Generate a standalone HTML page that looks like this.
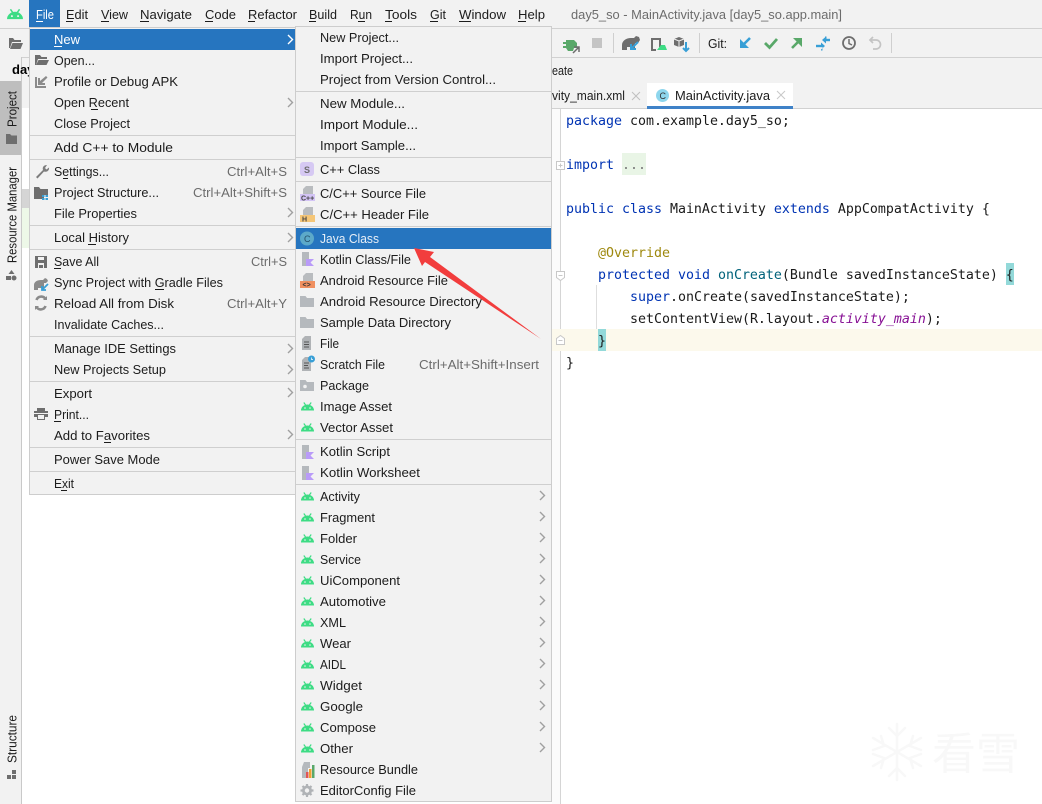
<!DOCTYPE html>
<html lang="en"><head><meta charset="utf-8"><title>day5_so - MainActivity.java</title>
<style>
html,body{margin:0;padding:0;background:#fff;width:1042px;height:804px;overflow:hidden}
svg{display:block}
text{font-family:"Liberation Sans","Noto Sans CJK SC",sans-serif;font-size:13px;fill:#1c1c1c}
.s{fill:#6c6c6c}
.m{font-family:"DejaVu Sans Mono","Liberation Mono",monospace;font-size:13.29px;fill:#1a1a1a}
.k{fill:#0033b3}.a{fill:#9e880d}.f{fill:#00627a}.p{fill:#871094;font-style:italic}
.w{fill:#fff}
</style></head><body>
<svg xmlns="http://www.w3.org/2000/svg" width="1042" height="804" viewBox="0 0 1042 804">
<defs>
<g id="and"><path d="M0 9.500a6.500 6 0 0 1 13 0z" fill="#3ddc84"/><path d="M2.800 1.500l1.800 2.500M10.200 1.500l-1.800 2.500" stroke="#3ddc84" stroke-width="1.200"/><circle cx="4" cy="7" r=".8" fill="#f2f2f2"/><circle cx="9" cy="7" r=".8" fill="#f2f2f2"/></g>
<path id="chev" d="M0 0l4.500 4.500L0 9" fill="none" stroke="#a0a0a0" stroke-width="1.400"/>
<path id="dir" d="M0 0h5.500l1.500 2h7v9H0z" fill="#b5b9bd"/>
<g id="doc"><path d="M3 0h7v8H0V3z" fill="#b9bcbf"/></g>
<g id="kot"><path d="M1 0h7v14H1z" fill="#b5b9bd"/><path d="M5 7h8l-3.500 3.500L13 14H5z" fill="#b99bf8"/></g>
</defs>

<!-- base -->
<rect width="1042" height="804" fill="#fff"/>
<rect width="1042" height="108" fill="#f2f2f2"/>
<rect y="28" width="1042" height="1" fill="#d1d1d1"/>
<rect y="57" width="1042" height="1" fill="#d1d1d1"/>
<rect x="552" y="108" width="490" height="1" fill="#d1d1d1"/>

<!-- left strip -->
<rect x="0" y="57" width="21" height="747" fill="#f2f2f2"/>
<rect x="21" y="57" width="1" height="747" fill="#c9c9c9"/>
<rect x="0" y="81" width="21" height="74" fill="#bebebe"/>
<rect x="22" y="82" width="8" height="26" fill="#f2f2f2"/>
<rect x="22" y="189" width="8" height="19" fill="#d5d5d5"/>
<rect x="22" y="208" width="8" height="40" fill="#edf8e8"/>
<text transform="translate(16.500,127) rotate(-90)" textLength="36" lengthAdjust="spacingAndGlyphs">Project</text>
<path d="M6 134h4l1.500 1.500H17V144H6z" fill="#6e6e6e"/>
<text transform="translate(16.500,263) rotate(-90)" textLength="96" lengthAdjust="spacingAndGlyphs">Resource Manager</text>
<path d="M11.500 270l3 4h-6z M6 276h5v4H6z" fill="#6e6e6e"/><circle cx="14" cy="278" r="2.500" fill="#6e6e6e"/>
<text transform="translate(16.500,763) rotate(-90)" textLength="48" lengthAdjust="spacingAndGlyphs">Structure</text>
<path d="M12 770h4v4h-4zM7 775h4v4H7zM12 775h4v4h-4z" fill="#6e6e6e"/>
<text x="12" y="74" style="font-weight:700;fill:#000">day</text>

<!-- title & menu bar -->
<use href="#and" transform="translate(7,7.500) scale(1.230)"/>
<rect x="29" y="0" width="31" height="28" fill="#2675bf"/>
<text x="36" y="19" class="w" textLength="18" lengthAdjust="spacingAndGlyphs">File</text>
<text x="66" y="19" textLength="22" lengthAdjust="spacingAndGlyphs">Edit</text>
<text x="101" y="19" textLength="27" lengthAdjust="spacingAndGlyphs">View</text>
<text x="140" y="19" textLength="52" lengthAdjust="spacingAndGlyphs">Navigate</text>
<text x="205" y="19" textLength="31" lengthAdjust="spacingAndGlyphs">Code</text>
<text x="248" y="19" textLength="49" lengthAdjust="spacingAndGlyphs">Refactor</text>
<text x="309" y="19" textLength="28" lengthAdjust="spacingAndGlyphs">Build</text>
<text x="350" y="19" textLength="22" lengthAdjust="spacingAndGlyphs">Run</text>
<text x="385" y="19" textLength="32" lengthAdjust="spacingAndGlyphs">Tools</text>
<text x="430" y="19" textLength="16" lengthAdjust="spacingAndGlyphs">Git</text>
<text x="459" y="19" textLength="47" lengthAdjust="spacingAndGlyphs">Window</text>
<text x="518" y="19" textLength="27" lengthAdjust="spacingAndGlyphs">Help</text>
<path d="M66 21.500h7M101 21.500h8M140 21.500h9M205 21.500h8M248 21.500h7M309 21.500h7M358 21.500h7M385 21.500h7M430 21.500h8M459 21.500h12M518 21.500h8" stroke="#1c1c1c" fill="none"/>
<path d="M36 21.500h7" stroke="#fff"/>
<text x="571" y="19" class="s" textLength="271" lengthAdjust="spacingAndGlyphs">day5_so - MainActivity.java [day5_so.app.main]</text>
<path d="M9 38h4l1.500 2H21v2H12l-2 6H9z M12.500 43H23l-2.500 6H10z" fill="#6e6e6e"/>

<!-- toolbar -->
<path d="M566 40h8l3 3v5h-3l-1 3h-5l-2-3h-3v-2h3v-2h-3v-2h3z" fill="#59a869"/>
<path d="M574 47l5 0v5M579 47l-6 6" stroke="#6e6e6e" stroke-width="1.500" fill="none"/>
<rect x="592" y="38" width="10" height="10" fill="#c4c4c4"/>
<rect x="613" y="33" width="1" height="20" fill="#cfcfcf"/>
<path d="M622 50v-5c0-4 4-7 9-7h3l2-2 3 1 1 3-2 3-3 0v7h-3v-3h-5v3z" fill="#6e6e6e"/>
<path d="M638 42l-7 7M631 44v5h5" stroke="#389fd6" stroke-width="2" fill="none"/>
<path d="M651 38h10v9h-2v-7h-6v9h3v2h-5z" fill="#6e6e6e"/>
<path d="M657 50l4-5 4 0 2 5z" fill="#3ddc84"/>
<path d="M679 37l5 2v6l-5 2-5-2v-6z" fill="#6e6e6e"/><path d="M679 41v6M674 39l5 2 5-2" stroke="#f2f2f2" fill="none"/>
<path d="M686 42v9M683 48l3 3 3-3" stroke="#389fd6" stroke-width="2" fill="none"/>
<rect x="699" y="33" width="1" height="20" fill="#cfcfcf"/>
<text x="708" y="48" textLength="19" lengthAdjust="spacingAndGlyphs">Git:</text>
<path d="M750 38l-8 8" stroke="#389fd6" stroke-width="2.600" fill="none"/><path d="M740 39v9h9z" fill="#389fd6"/>
<path d="M765 43l4.500 4.500 7.500-8.500" stroke="#59a869" stroke-width="2.800" fill="none"/>
<path d="M792 48l8-8" stroke="#59a869" stroke-width="2.600" fill="none"/><path d="M793 38h9v9z" fill="#59a869"/>
<path d="M830 40h-6" stroke="#389fd6" stroke-width="2.400" fill="none"/><path d="M822 40l4-3.500v7zM825 36.500h1.500v3H825z" fill="#389fd6"/>
<path d="M816 46h6" stroke="#389fd6" stroke-width="2.400" fill="none"/><path d="M825 46l-4-3.500v7zM821 47h1.500v3.500H821z" fill="#389fd6"/>
<circle cx="849" cy="43" r="6" fill="none" stroke="#6e6e6e" stroke-width="1.800"/><path d="M849 39v4.500l3 1.500" stroke="#6e6e6e" stroke-width="1.500" fill="none"/>
<path d="M873 37l-3 3 3 3M870 40h6a4.500 4.500 0 0 1 0 9h-3" stroke="#c4c4c4" stroke-width="1.700" fill="none"/>
<rect x="891" y="33" width="1" height="20" fill="#cfcfcf"/>

<!-- breadcrumb & tabs -->
<text x="552" y="75" textLength="21" lengthAdjust="spacingAndGlyphs">eate</text>
<text x="552" y="100" textLength="73" lengthAdjust="spacingAndGlyphs">vity_main.xml</text>
<path d="M632 92l8 8M640 92l-8 8" stroke="#c0c0c0" fill="none"/>
<rect x="647" y="83" width="146" height="23" fill="#fff"/>
<rect x="647" y="106" width="146" height="3" fill="#3f82c8"/>
<circle cx="662.500" cy="95.500" r="6.500" fill="#8ed6ed"/>
<text x="659.500" y="99" style="font-size:9px;fill:#333">C</text>
<text x="675" y="100" textLength="95" lengthAdjust="spacingAndGlyphs">MainActivity.java</text>
<path d="M777 91l8 8M785 91l-8 8" stroke="#c8c8c8" fill="none"/>

<!-- editor -->
<rect x="552" y="109" width="8" height="695" fill="#fbfbfb"/>
<rect x="560" y="109" width="1" height="695" fill="#d5d5d5"/>
<rect x="552" y="329" width="490" height="22" fill="#fcf9ec"/>
<rect x="622" y="153" width="24" height="22" fill="#e9f5e6"/>
<rect x="1006" y="263" width="8" height="22" fill="#93d9d9"/>
<rect x="598" y="329" width="8" height="22" fill="#93d9d9"/>
<rect x="596" y="285" width="1" height="44" fill="#dedede"/>
<path d="M556.500 161.500h8v8h-8zM558.500 165.500h4M560.500 163.500v4" fill="#fff" stroke="#c8c8c8"/>
<path d="M556.500 271.500h8v6l-4 3-4-3zM558.500 275.500h4" fill="#fff" stroke="#c8c8c8"/>
<path d="M556.500 344.500h8v-6l-4-3-4 3zM558.500 340.500h4" fill="#fff" stroke="#c8c8c8"/>
<text x="566" y="125" class="m"><tspan class="k">package</tspan> com.example.day5_so;</text>
<text x="566" y="169" class="m"><tspan class="k">import</tspan> <tspan fill="#7a7a7a">...</tspan></text>
<text x="566" y="213" class="m"><tspan class="k">public class</tspan> MainActivity <tspan class="k">extends</tspan> AppCompatActivity {</text>
<text x="598" y="257" class="m a">@Override</text>
<text x="598" y="279" class="m"><tspan class="k">protected void</tspan> <tspan class="f">onCreate</tspan>(Bundle savedInstanceState) {</text>
<text x="630" y="301" class="m"><tspan class="k">super</tspan>.onCreate(savedInstanceState);</text>
<text x="630" y="323" class="m">setContentView(R.layout.<tspan class="p">activity_main</tspan>);</text>
<text x="598" y="345" class="m">}</text>
<text x="566" y="367" class="m">}</text>

<!-- watermark -->
<g stroke="#f8f8f8" stroke-width="2.500" fill="none" stroke-linecap="round">
<path d="M897 724v56M873 738l48 28M873 766l48-28M889 728l8 8 8-8M889 776l8-8 8 8M873 750l11-4-3-10M921 754l-11 4 3 10M873 754l11 4-3 10M921 750l-11-4 3-10"/>
</g>
<text x="932" y="769" style="font-size:44px;font-weight:400;fill:#f8f8f8;font-family:'Noto Sans CJK SC','WenQuanYi Zen Hei',sans-serif">看雪</text>

<!-- left menu -->
<rect x="29.500" y="27.500" width="266" height="467" fill="#f2f2f2" stroke="#cdcdcd"/>
<rect x="30" y="29" width="265" height="21" fill="#2675bf"/>
<g fill="#cfcfcf">
<rect x="30" y="135" width="265" height="1"/><rect x="30" y="159" width="265" height="1"/><rect x="30" y="225" width="265" height="1"/><rect x="30" y="249" width="265" height="1"/><rect x="30" y="336" width="265" height="1"/><rect x="30" y="381" width="265" height="1"/><rect x="30" y="447" width="265" height="1"/><rect x="30" y="471" width="265" height="1"/>
</g>
<text x="54" y="44" class="w" textLength="26" lengthAdjust="spacingAndGlyphs">New</text>
<path d="M54 46.500h8" stroke="#fff"/>
<text x="54" y="65" textLength="41" lengthAdjust="spacingAndGlyphs">Open...</text>
<text x="54" y="86" textLength="124" lengthAdjust="spacingAndGlyphs">Profile or Debug APK</text>
<text x="54" y="107" textLength="75" lengthAdjust="spacingAndGlyphs">Open Recent</text>
<text x="54" y="128" textLength="76" lengthAdjust="spacingAndGlyphs">Close Project</text>
<text x="54" y="152" textLength="119" lengthAdjust="spacingAndGlyphs">Add C++ to Module</text>
<text x="54" y="176" textLength="55" lengthAdjust="spacingAndGlyphs">Settings...</text>
<text x="54" y="197" textLength="105" lengthAdjust="spacingAndGlyphs">Project Structure...</text>
<text x="54" y="218" textLength="83" lengthAdjust="spacingAndGlyphs">File Properties</text>
<text x="54" y="242" textLength="75" lengthAdjust="spacingAndGlyphs">Local History</text>
<text x="54" y="266" textLength="45" lengthAdjust="spacingAndGlyphs">Save All</text>
<text x="54" y="287" textLength="169" lengthAdjust="spacingAndGlyphs">Sync Project with Gradle Files</text>
<text x="54" y="308" textLength="120" lengthAdjust="spacingAndGlyphs">Reload All from Disk</text>
<text x="54" y="329" textLength="110" lengthAdjust="spacingAndGlyphs">Invalidate Caches...</text>
<text x="54" y="353" textLength="122" lengthAdjust="spacingAndGlyphs">Manage IDE Settings</text>
<text x="54" y="374" textLength="112" lengthAdjust="spacingAndGlyphs">New Projects Setup</text>
<text x="54" y="398" textLength="38" lengthAdjust="spacingAndGlyphs">Export</text>
<text x="54" y="419" textLength="35" lengthAdjust="spacingAndGlyphs">Print...</text>
<text x="54" y="440" textLength="96" lengthAdjust="spacingAndGlyphs">Add to Favorites</text>
<text x="54" y="464" textLength="106" lengthAdjust="spacingAndGlyphs">Power Save Mode</text>
<text x="54" y="488" textLength="20" lengthAdjust="spacingAndGlyphs">Exit</text>
<path d="M91 109.500h7M88 244.500h8M63 178.500h5M54 268.500h7M155 289.500h9M54 421.500h7M104 442.500h7M61 490.500h6" stroke="#1c1c1c" fill="none"/>
<text x="227" y="176" class="s" textLength="60" lengthAdjust="spacingAndGlyphs">Ctrl+Alt+S</text>
<text x="193" y="197" class="s" textLength="94" lengthAdjust="spacingAndGlyphs">Ctrl+Alt+Shift+S</text>
<text x="251" y="266" class="s" textLength="36" lengthAdjust="spacingAndGlyphs">Ctrl+S</text>
<text x="227" y="308" class="s" textLength="60" lengthAdjust="spacingAndGlyphs">Ctrl+Alt+Y</text>
<path d="M288 35l4.500 4.500L288 44" fill="none" stroke="#fff" stroke-width="1.400"/>
<use href="#chev" x="288" y="98"/><use href="#chev" x="288" y="208"/><use href="#chev" x="288" y="233"/><use href="#chev" x="288" y="344"/><use href="#chev" x="288" y="365"/><use href="#chev" x="288" y="388"/><use href="#chev" x="288" y="430"/>
<!-- left menu icons -->
<path d="M35 55h5l1.500 2H47v2H38l-2 6h-1z M38.500 60H49l-2.500 5H36z" fill="#6e6e6e"/>
<path d="M35 77h2v9h9v2H35z M46 76l1.500 1.500-5.500 5.500h3v2h-7v-7h2v3z" fill="#8b8b8b"/>
<path d="M36 177l7-7c-1-3 1-5 4-5l-2 3 1.500 1.500 2.500-2c.5 3-2 5-5 4l-6.500 7z" fill="#7d7d7d"/>
<path d="M34 187h5l1.500 2H48v6h-4v4H34z" fill="#6e6e6e"/><path d="M42 195h2.500v2H42zM45.500 195H48v2h-2.500zM42 198h2.500v2H42zM45.500 198H48v2h-2.500z" fill="#389fd6"/>
<path d="M35 256h12v12H35z" fill="#6e6e6e"/><path d="M38 257h6v3h-6zM38 263h6v5h-6z" fill="#f2f2f2"/><rect x="39" y="265" width="4" height="3" fill="#6e6e6e"/>
<path d="M34 290v-5c0-3 3-5 7-5h2l2-2 2 1 1 2-2 2h-2v7h-2v-2h-4v2z" fill="#8b8b8b"/>
<path d="M48 284l-6 6M42 286v4h4" stroke="#389fd6" stroke-width="1.800" fill="none"/>
<path d="M36.500 300a5 5 0 0 1 9-1M45.500 306a5 5 0 0 1-9 1" stroke="#8b8b8b" stroke-width="2.600" fill="none"/><path d="M47 296v4h-4zM35 310v-4h4z" fill="#8b8b8b"/>
<path d="M37 408h8v3h3v6h-3v3h-8v-3h-3v-6h3z" fill="#6e6e6e"/><rect x="38" y="415" width="6" height="4" fill="#f2f2f2"/><rect x="34" y="413" width="14" height="1" fill="#f2f2f2"/>

<!-- right submenu -->
<rect x="295.500" y="26.500" width="256" height="775" fill="#f2f2f2" stroke="#cdcdcd"/>
<rect x="296" y="228" width="255" height="21" fill="#2675bf"/>
<g fill="#cfcfcf">
<rect x="296" y="91" width="255" height="1"/><rect x="296" y="157" width="255" height="1"/><rect x="296" y="181" width="255" height="1"/><rect x="296" y="226" width="255" height="1"/><rect x="296" y="439" width="255" height="1"/><rect x="296" y="484" width="255" height="1"/>
</g>
<text x="320" y="42" textLength="79" lengthAdjust="spacingAndGlyphs">New Project...</text>
<text x="320" y="63" textLength="93" lengthAdjust="spacingAndGlyphs">Import Project...</text>
<text x="320" y="84" textLength="176" lengthAdjust="spacingAndGlyphs">Project from Version Control...</text>
<text x="320" y="108" textLength="85" lengthAdjust="spacingAndGlyphs">New Module...</text>
<text x="320" y="129" textLength="98" lengthAdjust="spacingAndGlyphs">Import Module...</text>
<text x="320" y="150" textLength="96" lengthAdjust="spacingAndGlyphs">Import Sample...</text>
<text x="320" y="174" textLength="60" lengthAdjust="spacingAndGlyphs">C++ Class</text>
<text x="320" y="198" textLength="106" lengthAdjust="spacingAndGlyphs">C/C++ Source File</text>
<text x="320" y="219" textLength="109" lengthAdjust="spacingAndGlyphs">C/C++ Header File</text>
<text x="320" y="243" textLength="59" lengthAdjust="spacingAndGlyphs" style="fill:#e6eef7">Java Class</text>
<text x="320" y="264" textLength="91" lengthAdjust="spacingAndGlyphs">Kotlin Class/File</text>
<text x="320" y="285" textLength="128" lengthAdjust="spacingAndGlyphs">Android Resource File</text>
<text x="320" y="306" textLength="162" lengthAdjust="spacingAndGlyphs">Android Resource Directory</text>
<text x="320" y="327" textLength="131" lengthAdjust="spacingAndGlyphs">Sample Data Directory</text>
<text x="320" y="348" textLength="19" lengthAdjust="spacingAndGlyphs">File</text>
<text x="320" y="369" textLength="65" lengthAdjust="spacingAndGlyphs">Scratch File</text>
<text x="419" y="369" class="s" textLength="120" lengthAdjust="spacingAndGlyphs">Ctrl+Alt+Shift+Insert</text>
<text x="320" y="390" textLength="49" lengthAdjust="spacingAndGlyphs">Package</text>
<text x="320" y="411" textLength="72" lengthAdjust="spacingAndGlyphs">Image Asset</text>
<text x="320" y="432" textLength="73" lengthAdjust="spacingAndGlyphs">Vector Asset</text>
<text x="320" y="456" textLength="70" lengthAdjust="spacingAndGlyphs">Kotlin Script</text>
<text x="320" y="477" textLength="100" lengthAdjust="spacingAndGlyphs">Kotlin Worksheet</text>
<text x="320" y="501" textLength="40" lengthAdjust="spacingAndGlyphs">Activity</text>
<text x="320" y="522" textLength="55" lengthAdjust="spacingAndGlyphs">Fragment</text>
<text x="320" y="543" textLength="37" lengthAdjust="spacingAndGlyphs">Folder</text>
<text x="320" y="564" textLength="41" lengthAdjust="spacingAndGlyphs">Service</text>
<text x="320" y="585" textLength="80" lengthAdjust="spacingAndGlyphs">UiComponent</text>
<text x="320" y="606" textLength="66" lengthAdjust="spacingAndGlyphs">Automotive</text>
<text x="320" y="627" textLength="26" lengthAdjust="spacingAndGlyphs">XML</text>
<text x="320" y="648" textLength="31" lengthAdjust="spacingAndGlyphs">Wear</text>
<text x="320" y="669" textLength="26" lengthAdjust="spacingAndGlyphs">AIDL</text>
<text x="320" y="690" textLength="42" lengthAdjust="spacingAndGlyphs">Widget</text>
<text x="320" y="711" textLength="43" lengthAdjust="spacingAndGlyphs">Google</text>
<text x="320" y="732" textLength="56" lengthAdjust="spacingAndGlyphs">Compose</text>
<text x="320" y="753" textLength="33" lengthAdjust="spacingAndGlyphs">Other</text>
<text x="320" y="774" textLength="98" lengthAdjust="spacingAndGlyphs">Resource Bundle</text>
<text x="320" y="795" textLength="96" lengthAdjust="spacingAndGlyphs">EditorConfig File</text>
<!-- chevrons -->
<use href="#chev" x="540" y="491"/><use href="#chev" x="540" y="512"/><use href="#chev" x="540" y="533"/><use href="#chev" x="540" y="554"/><use href="#chev" x="540" y="575"/><use href="#chev" x="540" y="596"/><use href="#chev" x="540" y="617"/><use href="#chev" x="540" y="638"/><use href="#chev" x="540" y="659"/><use href="#chev" x="540" y="680"/><use href="#chev" x="540" y="701"/><use href="#chev" x="540" y="722"/><use href="#chev" x="540" y="743"/>
<!-- android icons -->
<use href="#and" x="301" y="401"/><use href="#and" x="301" y="422"/><use href="#and" x="301" y="491"/><use href="#and" x="301" y="512"/><use href="#and" x="301" y="533"/><use href="#and" x="301" y="554"/><use href="#and" x="301" y="575"/><use href="#and" x="301" y="596"/><use href="#and" x="301" y="617"/><use href="#and" x="301" y="638"/><use href="#and" x="301" y="659"/><use href="#and" x="301" y="680"/><use href="#and" x="301" y="701"/><use href="#and" x="301" y="722"/><use href="#and" x="301" y="743"/>
<!-- other submenu icons -->
<rect x="300" y="162" width="14" height="14" rx="3" fill="#d6c9f3"/>
<text x="304" y="173" style="font-size:9px;font-weight:700;fill:#6e6e6e">S</text>
<use href="#doc" x="303" y="186"/>
<rect x="300" y="194" width="15" height="7" fill="#d3c4f5"/>
<text x="301" y="200.500" style="font-size:7px;font-weight:700;fill:#444">C++</text>
<use href="#doc" x="303" y="207"/>
<rect x="300" y="215" width="15" height="7" fill="#f5c677"/>
<text x="302" y="221.500" style="font-size:7px;font-weight:700;fill:#444">H</text>
<circle cx="307" cy="238.500" r="7" fill="#5ca9c9"/>
<text x="304" y="242" style="font-size:9px;fill:#24506a">C</text>
<use href="#kot" x="301" y="252"/>
<use href="#doc" x="303" y="273"/>
<rect x="300" y="281" width="15" height="7" fill="#f09060"/>
<text x="302.500" y="287" style="font-size:7px;font-weight:700;fill:#333">&lt;&gt;</text>
<use href="#dir" x="300" y="296"/><use href="#dir" x="300" y="317"/>
<path d="M305 336h6v14h-9v-11z" fill="#b0b3b6"/><path d="M304 342h5M304 344.500h5M304 347h5" stroke="#555"/>
<path d="M305 357h6v14h-9v-11z" fill="#b0b3b6"/><path d="M304 363h5M304 365.500h4M304 368h5" stroke="#555"/>
<circle cx="311.500" cy="359" r="3.500" fill="#389fd6"/><path d="M311.500 357.500v2h1.500" stroke="#fff" stroke-width=".7" fill="none"/>
<use href="#dir" x="300" y="380"/><circle cx="305" cy="386.500" r="1.800" fill="#f2f2f2"/>
<use href="#kot" x="301" y="445"/><use href="#kot" x="301" y="466"/>
<path d="M304 762h6v6h-2v10h-6v-11z" fill="#b5b9bd"/>
<rect x="306" y="772" width="2.500" height="6" fill="#e05555"/><rect x="309" y="769" width="2.500" height="9" fill="#f0a030"/><rect x="312" y="765" width="2.500" height="13" fill="#59a869"/>
<path d="M307 784v13M300.500 790.500h13M302.500 786l9 9M311.500 786l-9 9" stroke="#b0b3b6" stroke-width="2.200"/>
<circle cx="307" cy="790.500" r="5" fill="#b0b3b6"/><circle cx="307" cy="790.500" r="2.200" fill="#f2f2f2"/>

<!-- red arrow -->
<polygon points="414,248 434,252 430,257 541,339 425,262 422,266" fill="#f23d3d"/>
</svg>
</body></html>
